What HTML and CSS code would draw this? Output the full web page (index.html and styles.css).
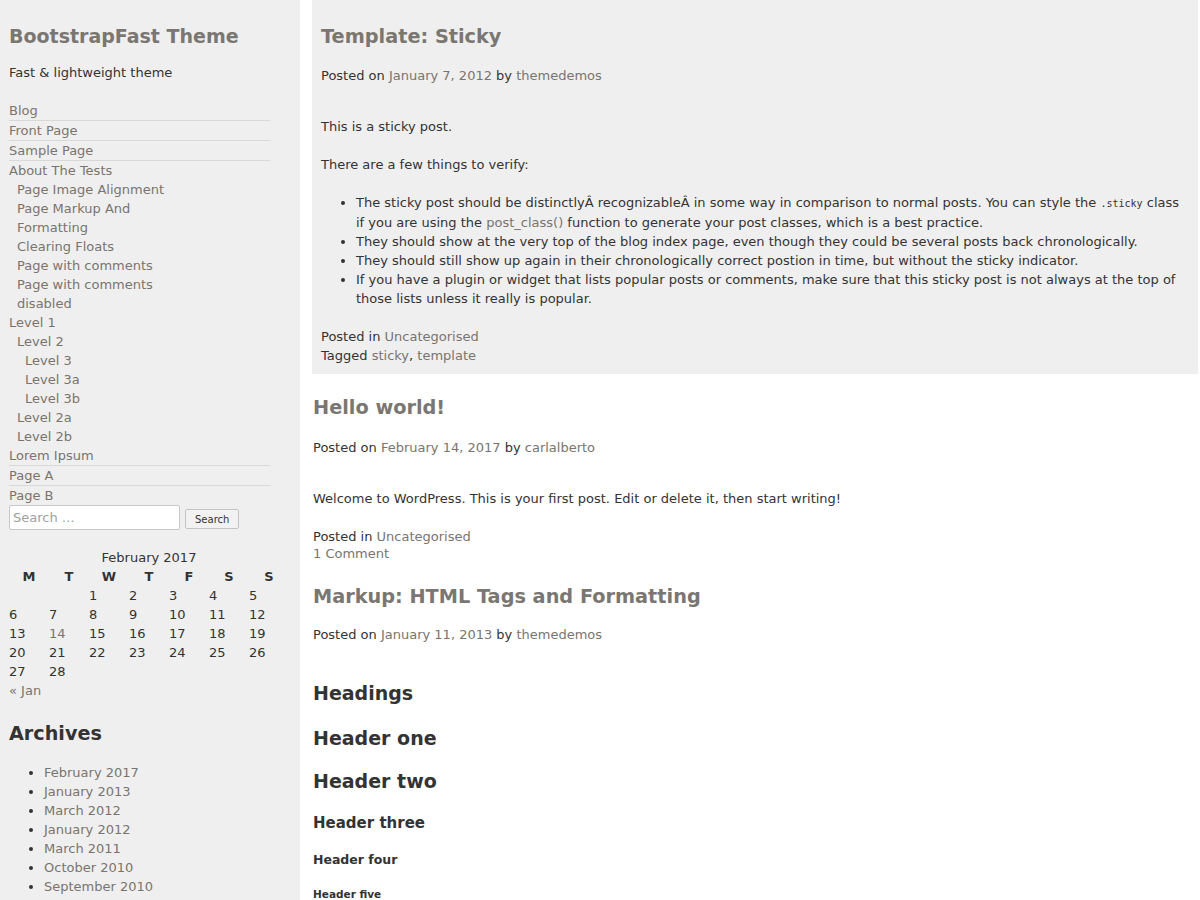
FILE: index.html
```html
<!DOCTYPE html>
<html lang="en">
<head>
    <meta charset="UTF-8">
    <title>BootstrapFast Theme</title>
    <link rel="stylesheet" href="styles.css">
</head>
<body>

    <!-- Sidebar -->
    <aside class="sidebar">
        <h1 class="site-title"><a href="#">BootstrapFast Theme</a></h1>
        <p class="site-description">Fast &amp; lightweight theme</p>

        <ul class="menu">
            <li class="item"><a href="#">Blog</a></li>
            <li class="item"><a href="#">Front Page</a></li>
            <li class="item"><a href="#">Sample Page</a></li>
            <li class="parent"><a href="#">About The Tests</a>
                <ul>
                    <li><a href="#">Page Image Alignment</a></li>
                    <li><a href="#">Page Markup And Formatting</a></li>
                    <li><a href="#">Clearing Floats</a></li>
                    <li><a href="#">Page with comments</a></li>
                    <li><a href="#">Page with comments disabled</a></li>
                </ul>
            </li>
            <li class="parent"><a href="#">Level 1</a>
                <ul>
                    <li><a href="#">Level 2</a>
                        <ul>
                            <li><a href="#">Level 3</a></li>
                            <li><a href="#">Level 3a</a></li>
                            <li><a href="#">Level 3b</a></li>
                        </ul>
                    </li>
                    <li><a href="#">Level 2a</a></li>
                    <li><a href="#">Level 2b</a></li>
                </ul>
            </li>
            <li class="item"><a href="#">Lorem Ipsum</a></li>
            <li class="item"><a href="#">Page A</a></li>
            <li class="last"><a href="#">Page B</a></li>
        </ul>

        <form class="search-form">
            <input type="search" class="search-field" placeholder="Search …">
            <button type="button" class="search-submit">Search</button>
        </form>

        <table class="calendar">
            <caption>February 2017</caption>
            <thead>
                <tr><th>M</th><th>T</th><th>W</th><th>T</th><th>F</th><th>S</th><th>S</th></tr>
            </thead>
            <tbody>
                <tr><td></td><td></td><td>1</td><td>2</td><td>3</td><td>4</td><td>5</td></tr>
                <tr><td>6</td><td>7</td><td>8</td><td>9</td><td>10</td><td>11</td><td>12</td></tr>
                <tr><td>13</td><td><a href="#">14</a></td><td>15</td><td>16</td><td>17</td><td>18</td><td>19</td></tr>
                <tr><td>20</td><td>21</td><td>22</td><td>23</td><td>24</td><td>25</td><td>26</td></tr>
                <tr><td>27</td><td>28</td><td></td><td></td><td></td><td></td><td></td></tr>
            </tbody>
        </table>
        <div class="calendar-nav"><a href="#">&laquo; Jan</a></div>

        <h2 class="widget-title">Archives</h2>
        <ul class="archives">
            <li><a href="#">February 2017</a></li>
            <li><a href="#">January 2013</a></li>
            <li><a href="#">March 2012</a></li>
            <li><a href="#">January 2012</a></li>
            <li><a href="#">March 2011</a></li>
            <li><a href="#">October 2010</a></li>
            <li><a href="#">September 2010</a></li>
        </ul>
    </aside>

    <!-- Posts -->
    <main class="content">
        <article class="post sticky">
            <h2 class="entry-title"><a href="#">Template: Sticky</a></h2>
            <div class="entry-meta">Posted on <a href="#">January 7, 2012</a> by <a href="#">themedemos</a></div>
            <div class="entry-content">
                <p>This is a sticky post.</p>
                <p>There are a few things to verify:</p>
                <ul>
                    <li>The sticky post should be distinctlyÂ recognizableÂ in some way in comparison to normal posts. You can style the <code>.sticky</code> class if you are using the <a href="#">post_class()</a> function to generate your post classes, which is a best practice.</li>
                    <li>They should show at the very top of the blog index page, even though they could be several posts back chronologically.</li>
                    <li>They should still show up again in their chronologically correct postion in time, but without the sticky indicator.</li>
                    <li>If you have a plugin or widget that lists popular posts or comments, make sure that this sticky post is not always at the top of those lists unless it really is popular.</li>
                </ul>
            </div>
            <footer class="entry-footer">
                <div>Posted in <a href="#">Uncategorised</a></div>
                <div>Tagged <a href="#">sticky</a>, <a href="#">template</a></div>
            </footer>
        </article>

        <article class="post">
            <h2 class="entry-title"><a href="#">Hello world!</a></h2>
            <div class="entry-meta">Posted on <a href="#">February 14, 2017</a> by <a href="#">carlalberto</a></div>
            <div class="entry-content">
                <p>Welcome to WordPress. This is your first post. Edit or delete it, then start writing!</p>
            </div>
            <footer class="entry-footer">
                <div>Posted in <a href="#">Uncategorised</a></div>
                <div class="comments-link"><a href="#">1 Comment</a></div>
            </footer>
        </article>

        <article class="post">
            <h2 class="entry-title"><a href="#">Markup: HTML Tags and Formatting</a></h2>
            <div class="entry-meta">Posted on <a href="#">January 11, 2013</a> by <a href="#">themedemos</a></div>
            <div class="entry-content markup">
                <h1>Headings</h1>
                <h1>Header one</h1>
                <h2>Header two</h2>
                <h3>Header three</h3>
                <h4>Header four</h4>
                <h5>Header five</h5>
            </div>
        </article>
    </main>

</body>
</html>
```
FILE: styles.css
```css
html, body {
    height: 100%;
}
body {
    margin: 0;
    font-family: "DejaVu Sans", Verdana, sans-serif;
    font-size: 13px;
    line-height: 19px;
    color: #333;
    background: #fff;
    display: flex;
    overflow: hidden; /* no scrollbar, like the original shot */
}
a {
    color: #7a746e;
    text-decoration: none;
}

/* Sidebar */
.sidebar {
    width: 300px;
    flex-shrink: 0;
    box-sizing: border-box;
    padding: 0 11px 0 9px;
    background: #efefef;
    min-height: 100%;
}
.site-title {
    font-size: 19px;
    line-height: 24px;
    margin: 24px 0 15px;
}
.site-title a {
    color: #7a7672;
}
.site-description {
    margin: 0 0 19px;
}
.menu,
.menu ul {
    list-style: none;
    margin: 0;
    padding: 0;
}
.menu {
    width: 261px;
}
.menu ul {
    padding-left: 8px;
    width: 170px;
}
.menu .item {
    border-bottom: 1px solid #d8d8d8;
}

/* Search */
.search-form {
    display: flex;
    align-items: center;
    gap: 5px;
    height: 25px;
}
.search-field {
    width: 171px;
    height: 25px;
    box-sizing: border-box;
    margin: 0;
    padding: 2px 3px;
    border: 1px solid #c8c8c8;
    border-radius: 2px;
    font-family: "DejaVu Sans", Verdana, sans-serif;
    font-size: 13px;
    color: #333;
    background: #fff;
}
.search-field::placeholder {
    color: #a0a0a0;
}
.search-submit {
    height: 20px;
    margin: 3px 0 0;
    padding: 0 9px;
    font-family: "DejaVu Sans", Verdana, sans-serif;
    font-size: 10px;
    color: #333;
    background: #f2f2f2;
    border: 1px solid #c4c4c4;
    border-radius: 2px;
}

/* Calendar */
.calendar {
    width: 280px;
    margin-top: 18px;
    border-collapse: collapse;
    table-layout: fixed;
}
.calendar caption {
    line-height: 19px;
}
.calendar th,
.calendar td {
    padding: 0;
    height: 19px;
}
.calendar th {
    text-align: center;
    font-weight: bold;
}
.calendar td {
    text-align: left;
}
.widget-title {
    font-size: 19.2px;
    line-height: 24px;
    margin: 22px 0 17px;
}
.archives {
    margin: 0;
    padding-left: 35px;
}

/* Posts */
.content {
    flex: 1;
    margin: 0 2px 0 12px;
    min-width: 0;
}
.post {
    padding: 0 1px;
}
.sticky {
    background: #efefef;
    padding: 3px 9px 9px;
}
.entry-title {
    font-size: 19.3px;
    line-height: 24px;
    margin: 22px 0 18px;
}
.sticky .entry-title {
    margin-bottom: 17px;
}
.post:last-child .entry-title {
    margin-bottom: 16px;
}
.entry-title a {
    color: #7a7672;
}
.entry-meta {
    margin-bottom: 32px;
}
.entry-content p {
    margin: 0 0 19px;
}
.entry-content ul {
    margin: 0 0 19px;
    padding-left: 35px;
}
.entry-content code {
    font-family: "DejaVu Sans Mono", monospace;
    font-size: 10px;
}
.comments-link {
    line-height: 15px;
    padding-bottom: 2px;
}

/* Markup sample headings */
.markup h1,
.markup h2 {
    font-size: 19px;
    line-height: 24px;
    margin: 21px 0 0;
}
.markup h1:first-child {
    margin-top: 37px;
}
.markup h2 {
    margin-top: 19px;
}
.markup h3 {
    font-size: 15px;
    line-height: 19px;
    margin: 21px 0 0;
}
.markup h4 {
    font-size: 12.5px;
    line-height: 16px;
    margin: 19px 0 0;
}
.markup h5 {
    font-size: 10.5px;
    line-height: 13px;
    margin: 20px 0 0;
}
```
